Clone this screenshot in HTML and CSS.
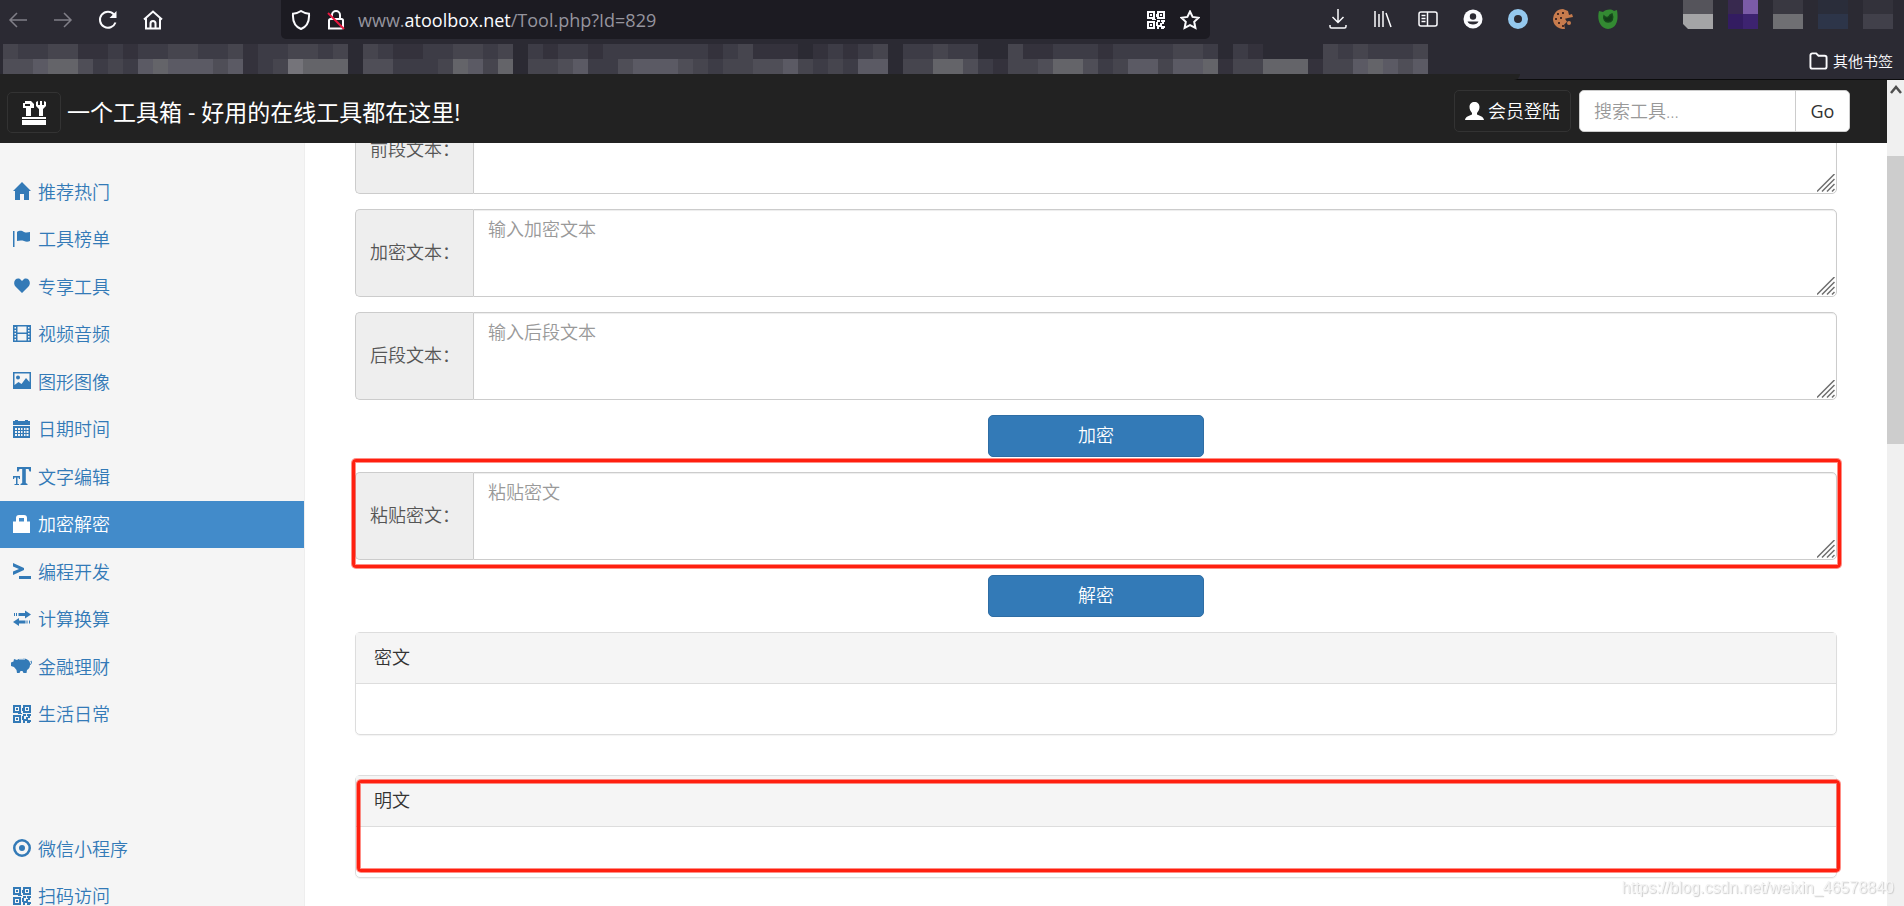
FILE: index.html
```html
<!DOCTYPE html>
<html lang="zh-CN">
<head>
<meta charset="utf-8">
<title>一个工具箱 - 好用的在线工具都在这里!</title>
<link rel="stylesheet" href="styles.css">
</head>
<body>
<svg class="defs" aria-hidden="true">
  <symbol id="qr" viewBox="0 0 18 18"><path fill="currentColor" fill-rule="evenodd" d="M0 0h8v8H0zM2 2v4h4V2zM3 3h2v2H3zM10 0h8v8h-8zM12 2v4h4V2zM13 3h2v2h-2zM0 10h8v8H0zM2 12v4h4v-4zM3 13h2v2H3zM9 3h1v3H9zM5 8h4v1H5zM10 9h3v2h-3zM14 9h4v2h-1v2h-2v-2h-1zM9 11h2v3h2v-2h2v3h3v2h-1v1h-3v-2h-2v2h-2v-3H9z"/></symbol>
  <symbol id="grip" viewBox="0 0 18 18"><path d="M0 17.500L17.500 0M5 17.500L17.500 5M10 17.500L17.500 10M15 17.500l2.500-2.500" stroke="#6f6f6f" stroke-width="1.500" fill="none"/></symbol>
</svg>

<header class="browser">
  <div class="toolbar">
    <div class="nav-buttons">
      <button class="tool dim" aria-label="后退"><svg viewBox="0 0 20 20"><path d="M19 10H2M9 3l-7 7 7 7"/></svg></button>
      <button class="tool dim" aria-label="前进"><svg viewBox="0 0 20 20"><path d="M1 10h17M11 3l7 7-7 7"/></svg></button>
      <button class="tool" aria-label="刷新"><svg viewBox="0 0 20 20"><path class="heavy" d="M17.500 12.500A8 8 0 1 1 16 4.500"/><path class="solid" d="M18.500 1v7h-7z"/></svg></button>
      <button class="tool" aria-label="主页"><svg viewBox="0 0 20 20"><path class="heavy" d="M1 9.500L10 1.500l9 8M3 8.500V18.500h14V8.500M7.500 18.500v-5a2.500 2.500 0 0 1 5 0v5"/></svg></button>
    </div>
    <div class="address">
      <svg class="ico" viewBox="0 0 20 20"><path class="heavy" d="M10 1c3 2 5 2.600 8 2.800C18.500 11 16 16.500 10 19 4 16.500 1.500 11 2 3.800 5 3.600 7 3 10 1z"/></svg>
      <svg class="ico" viewBox="0 0 20 20"><path class="heavy" d="M6 9V5a4 4 0 0 1 8 0v4M3 18.500V10.500a1.500 1.500 0 0 1 1.500-1.500h11A1.500 1.500 0 0 1 17 10.500v6.500a1.500 1.500 0 0 1-1.500 1.500z"/><path d="M2 3l16 16" stroke="#e8173f" stroke-width="2"/></svg>
      <div class="url">www.<b>atoolbox.net</b>/Tool.php?Id=829</div>
      <svg class="qr" viewBox="0 0 18 18"><use href="#qr"/></svg>
      <svg class="ico" viewBox="0 0 20 20"><path class="heavy" d="M10 1.500l2.600 5.400 6 .8-4.400 4.100 1.200 6.200L10 15.200 4.600 18l1.200-6.200L1.400 7.700l6-.8z"/></svg>
    </div>
    <div class="extensions">
      <button class="tool" aria-label="下载"><svg viewBox="0 0 20 20"><path d="M10 0v13M4.500 8l5.500 5.500L15.500 8M2 16v1.500a1.500 1.500 0 0 0 1.500 1.500h13a1.500 1.500 0 0 0 1.500-1.500V16"/></svg></button>
      <button class="tool" aria-label="书库"><svg viewBox="0 0 20 20"><path d="M2 2v16M6 5v13M10 2v16M13 4l5 14"/></svg></button>
      <button class="tool" aria-label="侧栏"><svg viewBox="0 0 20 20"><rect x="1" y="3" width="18" height="14" rx="2"/><path d="M9.500 3v14M3.500 6.500h4M3.500 9.500h4M3.500 12.500h4"/></svg></button>
      <button class="tool" aria-label="账户"><svg viewBox="0 0 20 20"><circle class="solid" cx="10" cy="10" r="9.500"/><circle cx="10" cy="7.500" r="3.200" fill="#2b2a33" stroke="none"/><path d="M4.500 12.500h11c-1 4-10 4-11 0z" fill="#2b2a33" stroke="none"/></svg></button>
      <button class="tool" aria-label="扩展"><svg viewBox="0 0 20 20"><circle cx="10" cy="10" r="7" stroke="#94c8ee" stroke-width="6"/></svg></button>
      <button class="tool" aria-label="Cookie"><svg viewBox="0 0 20 20"><path fill="#c77b4d" stroke="none" d="M10 0a10 10 0 1 0 2 19.800l-1-4 3-3-2-3 4-1 4-.800-1-3-3 1-1-4z"/><path fill="#4a2a22" stroke="none" d="M4 4h2v2H4zM9 3h2v2H9zM2 9h2v2H2zM7 8h2v2H7zM5 13h2v2H5zM9 16h2v2H9z"/><circle cx="16" cy="14" r="2" fill="#c77b4d" stroke="none"/></svg></button>
      <button class="tool" aria-label="代理"><svg viewBox="0 0 20 20"><path fill="#338a32" stroke="none" d="M1 2l4 1c4-3 8-3 11-1l3-1c1 6 2 18-9 19C1 19-1 9 1 2z"/><path d="M14 5c2 5 0 8-4 8-3 0-5-3-4-6 2 2 5 2 6-1z" fill="#123d17" stroke="#16481c" stroke-width="1.500"/></svg></button>
    </div>
    <svg class="swatches" viewBox="0 0 210 29" aria-hidden="true">
      <path fill="#55545b" d="M0 0h30v14H0z"/><path fill="#a4a4a6" d="M0 14h30v15H5l-5-5z"/>
      <path fill="#38294f" d="M45 0h15v14H45z"/><path fill="#7b5ba7" d="M60 0h15v14H60z"/><path fill="#331c61" d="M45 14h15v15H45z"/><path fill="#3d2370" d="M60 14h15v15H60z"/>
      <path fill="#393841" d="M90 0h30v14H90z"/><path fill="#6f6f73" d="M90 14h30v15H90z"/>
      <path fill="#2a2d3a" d="M135 0h30v14h-30z"/><path fill="#2d3549" d="M135 14h30v15h-30z"/>
      <path fill="#33323b" d="M180 0h30v14h-30z"/><path fill="#41404a" d="M180 14h30v15h-30z"/>
    </svg>
  </div>
  <div class="bookmarks">
    <svg class="mosaic" id="mosaic" viewBox="0 0 1425 30" aria-hidden="true"></svg>
    <button class="other"><svg viewBox="0 0 20 18"><path d="M1.500 15V3a2 2 0 0 1 2-2h4l2.500 2.500h6.500a2 2 0 0 1 2 2V15a2 2 0 0 1-2 2h-13a2 2 0 0 1-2-2z"/></svg>其他书签</button>
  </div>
</header>

<div class="viewport">
  <div class="page">
    <nav class="navbar">
      <a class="logo" href="#" aria-label="首页"><svg viewBox="0 0 24 25"><path fill="#fff" d="M0 17h24v2H0zM0 20h24v5H0zM4 16V8H1V3h2V1h6l3 3v4H9v8z"/><path fill="#222" d="M3 4h5v2H3z"/><path fill="#fff" d="M17 16V9l-3-3V2l2-1v4h2V1h2v4h2V1l2 1v4l-3 3v7z"/></svg></a>
      <h1 class="title">一个工具箱 - 好用的在线工具都在这里!</h1>
      <a class="login" href="#"><svg viewBox="0 0 19 18"><path fill="#fff" d="M9.500 0c3 0 5 2 5 5 0 2.500-1 4-2.500 6v1.500c3 1.500 6.500 2 7 5.500H0c.500-3.500 4-4 7-5.500V11C5.500 9 4.500 7.500 4.500 5c0-3 2-5 5-5z"/></svg>会员登陆</a>
      <form class="search">
        <input type="text" placeholder="搜索工具..." aria-label="搜索工具">
        <button type="button">Go</button>
      </form>
    </nav>
    <div class="columns">
      <aside class="sidebar">
        <ul class="menu">
          <li><a href="#"><svg viewBox="0 0 18 18"><path d="M9 0l9 9h-2v9h-5v-6H7v6H2V9H0z"/></svg>推荐热门</a></li>
          <li><a href="#"><svg viewBox="0 0 18 18"><path d="M0 1h1.500v16H0zM4 2c3-2 5-1 7 0 2 .800 4 .500 6 0v9c-2 1-4 1-6 0-2-.800-5-.500-7 0z"/></svg>工具榜单</a></li>
          <li><a href="#"><svg viewBox="0 0 18 18"><path d="M9 16L2.500 9.500C-1 5 3 0 7 2l2 2 2-2c4-2 8 3 4.500 7.500z"/></svg>专享工具</a></li>
          <li><a href="#"><svg viewBox="0 0 18 18"><path fill-rule="evenodd" d="M0 0h18v17H0zM4.500 1.500v6h9v-6zM4.500 9v6.500h9V9zM1.500 2v1.500H3V2zM1.500 5v1.500H3V5zM1.500 8v1.500H3V8zM1.500 11v1.500H3V11zM1.500 14v1.500H3V14zM15 2v1.500h1.500V2zM15 5v1.500h1.500V5zM15 8v1.500h1.500V8zM15 11v1.500h1.500V11zM15 14v1.500h1.500V14z"/></svg>视频音频</a></li>
          <li><a href="#"><svg viewBox="0 0 18 18"><path fill-rule="evenodd" d="M0 0h18v17H0zM1.500 1.500V13l4-3 3 2 4.500-6 3.500 4V1.500zM5 3.500a2 2 0 1 1 0 4 2 2 0 0 1 0-4z"/></svg>图形图像</a></li>
          <li><a href="#"><svg viewBox="0 0 18 18"><path fill-rule="evenodd" d="M0 1h2V0h3v1h7V0h3v1h2v4H0zM0 6h17v12H0zM2 8v2h2V8zM5 8v2h2V8zM8 8v2h1.500V8zM11 8v2h1.500V8zM13.500 8v2h2V8zM2 11v2h2v-2zM5 11v2h2v-2zM8 11v2h1.500v-2zM11 11v2h1.500v-2zM13.500 11v2h2v-2zM2 14v2h2v-2zM5 14v2h2v-2zM8 14v2h1.500v-2zM11 14v2h1.500v-2zM13.500 14v2h2v-2z"/></svg>日期时间</a></li>
          <li><a href="#"><svg viewBox="0 0 18 18"><path d="M4 0h14v4.500h-1.500L15.500 2H12.800v14l1.700 1v1h-7v-1l1.700-1V2H6.500l-1 2.500H4zM0 9h7v3H6l-.500-1.500h-1V17H6v1H1.500v-1H3v-6.500H1.500L1 12H0z"/></svg>文字编辑</a></li>
          <li class="active"><a href="#"><svg viewBox="0 0 18 18"><path fill-rule="evenodd" d="M0 6.500h3V3a3 3 0 0 1 3-3h5a3 3 0 0 1 3 3v3.500h3V18H0zM6 6.500h5V3H6z"/></svg>加密解密</a></li>
          <li><a href="#"><svg viewBox="0 0 18 18"><path d="M0 1l11 5v2L0 13v-3.500L6 7 0 4.500zM6 14h12v3H6z"/></svg>编程开发</a></li>
          <li><a href="#"><svg viewBox="0 0 18 18"><path d="M1 3h1v3H1zM3 3h1v3H3zM5.500 3H12V0.500l6 4-6 4V6H5.500zM12.500 10.500H6V8l-6 4 6 4v-2.500h6.500zM13.500 10.500h1v3h-1zM16 10.500h1v3h-1z"/></svg>计算换算</a></li>
          <li><a href="#"><svg class="wide" viewBox="0 0 21 18"><path fill-rule="evenodd" d="M3 2l3 1c3-2.500 8-2.500 11 0 1.500 1 2 2.500 2.300 4 1.200-.500.700-2 0-2.500l1-1c1.500 2 0 4.500-1.300 4.500-.200 3-1.500 4-3 5l-.500 3H12.500l-1-2H9.500l-1 2H6l-.500-3L3 10 0 9V5.500l2.500-1zM8 2.500h6v-.800C12 1 10 1 8 1.700z"/></svg>金融理财</a></li>
          <li><a href="#"><svg viewBox="0 0 18 18"><use href="#qr"/></svg>生活日常</a></li>
        </ul>
        <ul class="menu extra">
          <li><a href="#"><svg viewBox="0 0 18 18"><path fill-rule="evenodd" d="M9 0a9 9 0 1 1 0 18A9 9 0 0 1 9 0zM9 2.500a6.500 6.500 0 1 0 0 13 6.500 6.500 0 0 0 0-13zM9 6a3 3 0 1 1 0 6 3 3 0 0 1 0-6z"/></svg>微信小程序</a></li>
          <li><a href="#"><svg viewBox="0 0 18 18"><use href="#qr"/></svg>扫码访问</a></li>
        </ul>
      </aside>
      <main class="content">
        <div class="field">
          <label for="before">前段文本：</label>
          <textarea id="before"></textarea>
          <svg class="grip"><use href="#grip"/></svg>
        </div>
        <div class="field">
          <label for="plain">加密文本：</label>
          <textarea id="plain" placeholder="输入加密文本"></textarea>
          <svg class="grip"><use href="#grip"/></svg>
        </div>
        <div class="field">
          <label for="after">后段文本：</label>
          <textarea id="after" placeholder="输入后段文本"></textarea>
          <svg class="grip"><use href="#grip"/></svg>
        </div>
        <button class="primary">加密</button>
        <div class="field marked">
          <label for="cipher">粘贴密文：</label>
          <textarea id="cipher" placeholder="粘贴密文"></textarea>
          <svg class="grip"><use href="#grip"/></svg>
        </div>
        <button class="primary">解密</button>
        <section class="panel">
          <h2>密文</h2>
          <div class="result"></div>
        </section>
        <section class="panel marked">
          <h2>明文</h2>
          <div class="result"></div>
        </section>
      </main>
    </div>
  </div>
  <div class="scrollbar" aria-hidden="true">
    <svg viewBox="0 0 17 17"><path d="M4 13l5-6 5 6" fill="none" stroke="#505050" stroke-width="2.500"/></svg>
    <div class="thumb"></div>
  </div>
</div>
<div class="watermark">https://blog.csdn.net/weixin_46578840</div>
<script src="mosaic.js"></script>
</body>
</html>
```
FILE: styles.css
```css
* { box-sizing: border-box; }

body {
  margin: 0;
  height: 100vh;
  display: flex;
  flex-direction: column;
  overflow: hidden;
  background: #fff;
  color: #333;
  font: 18px/24px "Open Sans", "Noto Sans CJK SC", sans-serif;
  font-weight: 350;
}

button, input, textarea { font: inherit; color: inherit; }
button { padding: 0; border: 0; background: none; cursor: pointer; }
a { color: inherit; text-decoration: none; }
.defs { display: none; }

/* Browser frame */
.browser {
  position: relative;
  flex: none;
  height: 80px;
  background: #2b2a33;
  border-bottom: 1px solid #0c0c0d;
  color: #fbfbfe;
}
.browser::after {
  content: "";
  position: absolute;
  left: 0;
  right: 384px;
  bottom: -1px;
  height: 6px;
  background: #222;
  border-bottom-right-radius: 6px;
}
.toolbar { display: flex; align-items: flex-start; height: 44px; }
.nav-buttons { display: flex; gap: 25px; width: 281px; padding: 10px 0 0 8px; }
.tool { width: 20px; height: 20px; }
.tool svg, .ico { display: block; width: 20px; height: 20px; flex: none; }
.tool svg, .ico, .other svg {
  fill: none;
  stroke: #fbfbfe;
  stroke-width: 1.5;
}
.heavy { stroke-width: 2; }
.tool .solid { fill: #fbfbfe; stroke: none; }
.dim svg { stroke: #807f88; }
.address {
  display: flex;
  align-items: center;
  gap: 15px;
  flex: 1;
  height: 39px;
  padding: 0 10px;
  background: #1c1b22;
  border-radius: 0 0 5px 5px;
}
.url { flex: 1; margin-left: -3px; color: #95949e; font-size: 18px; font-weight: 400; white-space: nowrap; }
.url b { color: #fbfbfe; font-weight: 400; }
.qr { width: 18px; height: 18px; }
.extensions { display: flex; gap: 25px; padding: 9px 0 0 118px; }
.swatches { width: 210px; height: 29px; margin: 0 11px 0 65px; flex: none; }
.bookmarks { display: flex; align-items: flex-start; justify-content: space-between; padding: 0 11px 0 3px; }
.mosaic { width: 1425px; height: 30px; flex: none; }
.other { display: flex; align-items: center; gap: 5px; margin-top: 5px; font-size: 15px; }
.other svg { width: 19px; height: 18px; stroke-width: 2; }

/* Web page */
.viewport { flex: 1; min-height: 0; display: flex; }
.page { flex: 1; min-width: 0; display: flex; flex-direction: column; }
.navbar {
  flex: none;
  display: flex;
  align-items: flex-start;
  height: 63px;
  padding: 10px 37px 0 7px;
  background: #222;
  color: #fff;
}
.logo {
  display: flex;
  align-items: center;
  justify-content: center;
  width: 54px;
  height: 41px;
  margin-top: 2px;
  border: 1px solid #333;
  border-radius: 5px;
}
.logo svg { width: 24px; height: 25px; }
.title { flex: 1; margin: 7px 0 0 6px; font-size: 23px; line-height: 30px; font-weight: 400; }
.login {
  display: flex;
  align-items: center;
  gap: 4px;
  height: 42px;
  margin-right: 8px;
  padding: 0 10px;
  border: 1px solid #333;
  border-radius: 5px;
}
.login svg { width: 19px; height: 18px; }
.search { display: flex; margin: 0; }
.search input {
  width: 217px;
  height: 42px;
  padding: 0 14px;
  border: 1px solid #ccc;
  border-radius: 5px 0 0 5px;
  background: #fff;
}
.search button {
  width: 55px;
  height: 42px;
  margin-left: -1px;
  border: 1px solid #ccc;
  border-radius: 0 5px 5px 0;
  background: #fff;
  color: #333;
  font-weight: 400;
}
::placeholder { color: #999; opacity: 1; }

.columns { flex: 1; min-height: 0; display: flex; overflow: hidden; }
.sidebar {
  flex: none;
  width: 305px;
  padding-top: 25px;
  background: #f5f5f5;
  border-right: 1px solid #eee;
  overflow: hidden;
}
.menu {
  display: grid;
  grid-auto-rows: 1fr;
  height: 570px;
  margin: 0;
  padding: 0;
  list-style: none;
  color: #337ab7;
}
.menu.extra { height: 95px; margin-top: 87px; }
.menu a { display: flex; align-items: center; gap: 7px; height: 100%; padding-left: 13px; }
.menu svg { width: 18px; height: 18px; margin-bottom: 1px; fill: currentColor; flex: none; }
.menu .wide { width: 21px; margin: 0 -1px 1px -2px; }
.menu .active { background: #428bca; color: #fff; }

.content {
  flex: 1;
  min-width: 0;
  display: flex;
  flex-direction: column;
  gap: 15px;
  margin-top: -37px;
  padding: 0 50px;
}
.field { position: relative; flex: none; display: flex; height: 88px; }
.field label {
  display: flex;
  align-items: center;
  width: 118px;
  padding: 0 0 2px 14px;
  border: 1px solid #ccc;
  border-right: 0;
  border-radius: 5px 0 0 5px;
  background: #eee;
  color: #555;
  white-space: nowrap;
}
.field textarea {
  flex: 1;
  margin: 0;
  padding: 7px 14px;
  border: 1px solid #ccc;
  border-radius: 0 5px 5px 0;
  box-shadow: inset 0 1px 1px rgba(0, 0, 0, .075);
  background: #fff;
  resize: none;
  outline: 0;
}
.grip { position: absolute; right: 2px; bottom: 2px; width: 18px; height: 18px; }
.primary {
  flex: none;
  align-self: center;
  width: 216px;
  height: 42px;
  padding-bottom: 2px;
  border: 1px solid #2e6da4;
  border-radius: 5px;
  background: #337ab7;
  color: #fff;
}
.panel {
  position: relative;
  flex: none;
  border: 1px solid #ddd;
  border-radius: 5px;
  box-shadow: 0 1px 1px rgba(0, 0, 0, .05);
}
.panel + .panel { margin-top: 25px; }
.panel h2 {
  margin: 0;
  padding: 12px 18px 14px;
  border-bottom: 1px solid #ddd;
  background: #f5f5f5;
  font-size: 18px;
  font-weight: inherit;
}
.result { height: 50px; }
.marked::after {
  content: "";
  position: absolute;
  border: 3px solid #ff2010;
  border-radius: 4px;
  box-shadow: 0 0 0 1px rgba(255, 32, 16, .5), inset 0 0 0 1px rgba(255, 32, 16, .5);
  pointer-events: none;
}
.field.marked::after { inset: -13px -4px -8px -3px; }
.panel.marked::after { inset: 4px -4px 5px 1px; }

.scrollbar { flex: none; width: 17px; background: #f0f0f0; }
.scrollbar svg { display: block; width: 17px; height: 17px; }
.thumb { height: 288px; margin-top: 59px; background: #cdcdcd; }

.watermark {
  position: fixed;
  right: 10px;
  bottom: 6px;
  color: #f4f4f4;
  font: 16px/25px "Liberation Sans", sans-serif;
  text-shadow: 1px 1px 1px #ccc;
}
```
FILE: mosaic.js
```js
// Blurred bookmark labels: one digit per tile, from frame colour (0) to brightest (7).
const TILE = 15;
const palette = ["#2b2a33", "#34323c", "#3d3c46", "#46454e", "#4f4e57", "#5b5a64", "#646469", "#75747a"];
const rows = [
  "32233112122332231223323" + "03211223323" + "0212212222222123111012123" + "02232200" + "31122212222332" + "02100003232223",
  "44566423256555451237666" + "04422236536" + "0334522455543233445323255" + "03366421" + "33466423553556" + "13366613356545"
];
const mosaic = document.getElementById("mosaic");
rows.forEach((row, y) => {
  [...row].forEach((level, x) => {
    const tile = document.createElementNS("http://www.w3.org/2000/svg", "rect");
    tile.setAttribute("x", x * TILE);
    tile.setAttribute("y", y * TILE);
    tile.setAttribute("width", TILE);
    tile.setAttribute("height", TILE);
    tile.setAttribute("fill", palette[level]);
    mosaic.appendChild(tile);
  });
});
```
